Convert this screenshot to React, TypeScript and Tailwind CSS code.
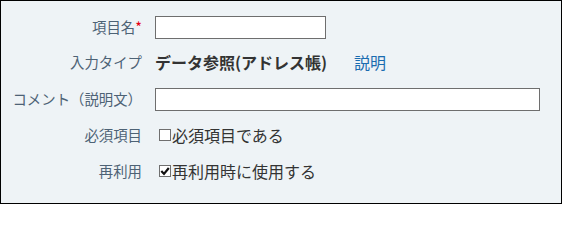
import React from 'react';

const font = { fontFamily: '"Noto Sans CJK JP", "Noto Sans", sans-serif' };

function Label({ children }: { children: React.ReactNode }) {
    return (
        <div className="w-[141px] shrink-0 text-right text-[14.4px] text-[#4d6275] whitespace-nowrap">
            {children}
        </div>
    );
}

function Box({ checked }: { checked?: boolean }) {
    return (
        <span className="inline-flex w-[12px] h-[12px] border border-[#6f6f6f] bg-white items-center justify-center mr-[1px]">
            {checked && (
                <svg viewBox="0 0 10 10" className="w-[10px] h-[10px]">
                    <path d="M1.3 5 L4 7.9 L8.8 2" fill="none" stroke="#111" strokeWidth={2.2} />
                </svg>
            )}
        </span>
    );
}

export default function App() {
    return (
        <div style={font} className="w-[562px] h-[204px] bg-[#eef3f6] border border-black pt-[9px]">
            <div className="flex items-center h-[34px]">
                <Label>
                    項目名<span className="text-[#e60012]">*</span>
                </Label>
                <div className="ml-[13px] w-[171px] h-[23px] bg-white border border-[#6e6e6e]" />
            </div>
            <div className="flex items-center h-[36px]">
                <Label>入力タイプ</Label>
                <div className="ml-[13px] text-[16px] font-bold text-[#333]">データ参照(アドレス帳)</div>
                <a className="ml-[27px] text-[16px] text-[#1a6cb0]">説明</a>
            </div>
            <div className="flex items-center h-[38px]">
                <Label>コメント（説明文）</Label>
                <div className="ml-[13px] w-[385px] h-[23px] bg-white border border-[#6e6e6e]" />
            </div>
            <div className="flex items-center h-[34px]">
                <Label>必須項目</Label>
                <div className="ml-[17px] flex items-center text-[16px] text-[#333]">
                    <Box />
                    必須項目である
                </div>
            </div>
            <div className="flex items-center h-[38px]">
                <Label>再利用</Label>
                <div className="ml-[17px] flex items-center text-[16px] text-[#333]">
                    <Box checked />
                    再利用時に使用する
                </div>
            </div>
        </div>
    );
}
